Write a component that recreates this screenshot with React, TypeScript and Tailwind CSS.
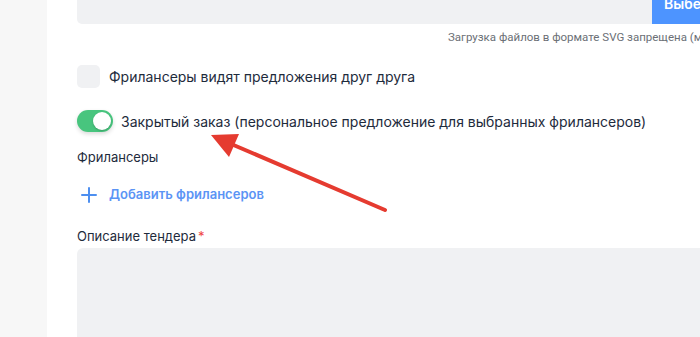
import React from "react";

export default function App() {
  return (
    <div className="relative flex h-[337px] w-[700px] overflow-hidden bg-white" style={{ fontFamily: "Inter, 'Noto Sans', sans-serif" }}>
      <div className="h-full w-[47px] shrink-0 bg-[#f7f7f7]" />
      <div className="flex w-[700px] shrink-0 flex-col pl-[30px]">
        <div className="flex h-[24px] w-[700px] shrink-0">
          <div className="h-full w-[575px] rounded-bl-[5px] bg-[#f0f1f3]" />
          <div className="h-full w-[120px] overflow-hidden bg-[#4d94ff] pl-[12px]">
            <div className="relative -top-[3px] whitespace-nowrap text-[14px] font-semibold leading-[14px] text-white">Выберите файл</div>
          </div>
        </div>
        <div className="mt-[6px] whitespace-nowrap pl-[371px] text-[11.5px] leading-[14px] text-[#6b6f76]" style={{ fontFamily: "Roboto, sans-serif" }}>
          Загрузка файлов в формате SVG запрещена (макс. 10 МБ)
        </div>
        <div className="mt-[21px] flex items-center gap-[9px]">
          <div className="h-[23px] w-[23px] rounded-[5px] bg-[#f0f1f3]" />
          <span className="text-[14px] text-[#1e2b3c]">Фрилансеры видят предложения друг друга</span>
        </div>
        <div className="mt-[22px] flex items-center gap-[8px]">
          <div className="flex h-[22px] w-[36px] items-center justify-end rounded-full bg-[#48c57e] pr-[2px] shadow-[0_2px_4px_rgba(0,0,0,0.15)]">
            <div className="h-[18px] w-[18px] rounded-full bg-white shadow-[0_1px_2px_rgba(0,0,0,0.2)]" />
          </div>
          <span className="text-[14px] text-[#1e2b3c]">Закрытый заказ (персональное предложение для выбранных фрилансеров)</span>
        </div>
        <div className="mt-[16px] text-[13px] leading-[18px] text-[#1e2b3c]">Фрилансеры</div>
        <div className="mt-[19px] flex items-center gap-[12px] pl-[4px]">
          <svg width="16" height="16" viewBox="0 0 16 16" fill="none">
            <path d="M8 1v14M1 8h14" stroke="#4d8ff0" strokeWidth="2" strokeLinecap="round" />
          </svg>
          <span className="text-[13px] font-semibold text-[#5b94f5]">Добавить фрилансеров</span>
        </div>
        <div className="mt-[22px] text-[13px] leading-[18px] text-[#1e2b3c]">
          Описание тендера<span className="ml-[2px] text-[#ef4444]">*</span>
        </div>
        <div className="mt-[3px] h-[100px] w-[700px] shrink-0 rounded-tl-[6px] bg-[#f0f1f3]" />
      </div>
      <svg className="pointer-events-none absolute left-0 top-0" width="700" height="337" viewBox="0 0 700 337">
        <line x1="385" y1="210" x2="230" y2="143.5" stroke="#e53b30" strokeWidth="4" strokeLinecap="round" />
        <polygon points="211,135 229,157 239,134" fill="#e53b30" />
      </svg>
    </div>
  );
}
